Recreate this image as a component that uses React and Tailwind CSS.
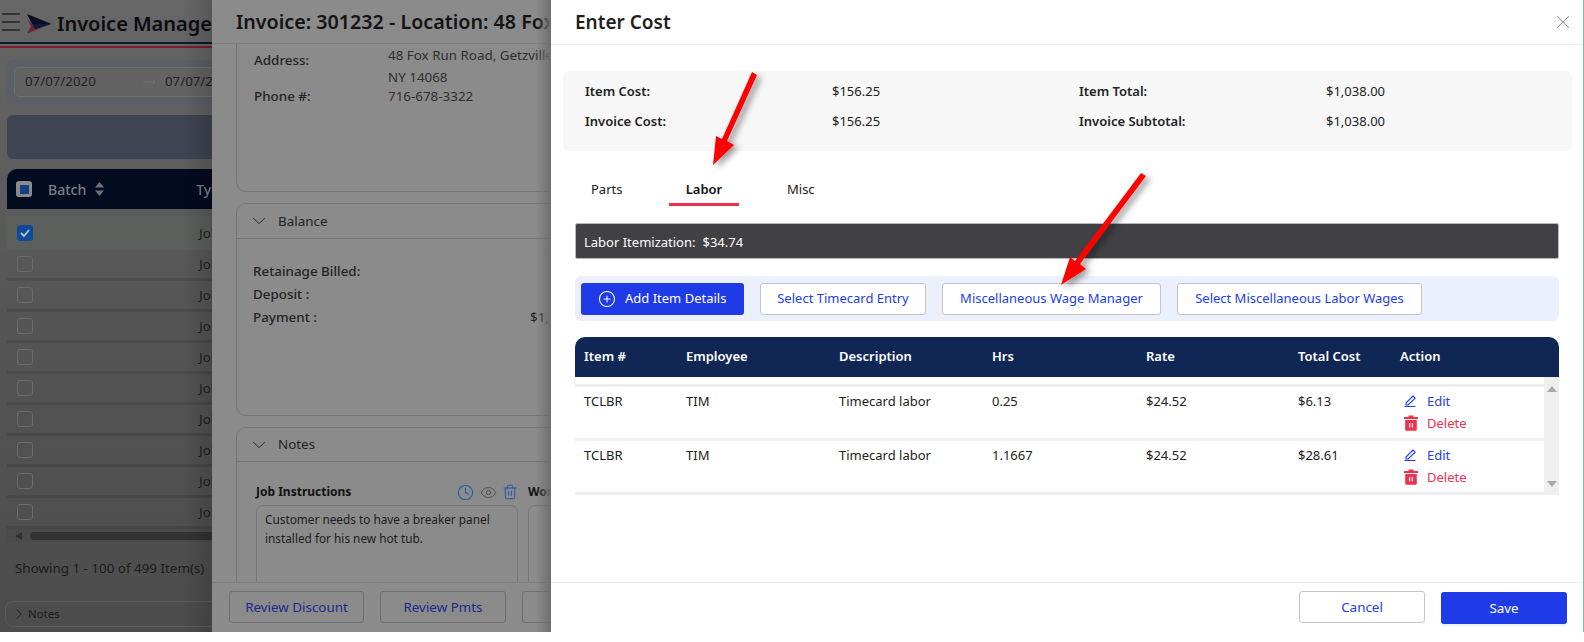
import { ChevronDown, ChevronRight, CirclePlus, Clock, Eye, MoveRight, Trash2, X } from "lucide-react";

function Logo() {
  return (
    <svg width="25" height="20" viewBox="0 0 25 20" className="shrink-0">
      <path d="M0 0 L24.5 10 L5 10 Z" fill="#080e22" />
      <path d="M5 10 L24.5 10 L8 15.5 Z" fill="#0f1a3a" />
      <path d="M0 5 L5 10 L8 15.5 L18 12.5 L0 19.5 L4 12 Z" fill="#6e2329" />
    </svg>
  );
}

function SolidTrash() {
  return (
    <svg width="16" height="16" viewBox="0 0 16 16" className="shrink-0">
      <path d="M5.5 0.5h5v1.6h4.5v2H1v-2h4.5z" fill="#f0304f" />
      <path d="M2.2 5h11.6v9.5a1.2 1.2 0 0 1-1.2 1.2H3.4a1.2 1.2 0 0 1-1.2-1.2z" fill="#f0304f" />
      <rect x="6" y="8" width="1.2" height="4.5" fill="#fff" />
      <rect x="8.8" y="8" width="1.2" height="4.5" fill="#fff" />
    </svg>
  );
}

function EditPen() {
  return (
    <svg width="12" height="12" viewBox="0 0 12 12" fill="none" stroke="currentColor" strokeWidth="1.1" className="shrink-0">
      <path d="M0.5 11.5 H11.5" />
      <path d="M2 10 V8 L9 1 L11.2 3.2 L4 10 Z" strokeLinejoin="round" />
    </svg>
  );
}

function LeftPanel() {
  const rows = [0, 1, 2, 3, 4, 5, 6, 7, 8];
  return (
    <div className="relative w-[212px] h-[632px] shrink-0 overflow-hidden bg-gradient-to-b from-[#676767] via-[#555555] to-[#4c4c4c] text-[#1a1a1a]">
      <div className="h-[42px] flex items-center">
        <div className="ml-[2px] w-[18px] shrink-0 flex flex-col gap-[6px] mt-[2px]">
          <div className="h-[2px] bg-[#333333]" />
          <div className="h-[2px] bg-[#333333]" />
          <div className="h-[2px] bg-[#333333]" />
        </div>
        <div className="ml-[7px] mt-[6px] shrink-0"><Logo /></div>
        <div className="ml-[5px] text-[20px] leading-none font-semibold whitespace-nowrap text-[#0c0c10] mt-[6px]">Invoice Management</div>
      </div>
      <div className="h-[2px] bg-[#0b1a33]" />
      <div className="h-[2px] bg-[#666666]" />
      <div className="h-[2px] bg-[#7a1f2b]" />
      <div className="mt-[12px] ml-[7px] w-[300px] h-[45px] rounded-[6px] bg-[#5c5f66] pt-[7px] pl-[7px]">
        <div className="h-[30px] rounded-[5px] bg-[#636363] border border-[#6e6e6e] flex items-center pl-[10px] text-[13.3px] text-[#222222]">
          <span className="w-[117px] shrink-0">07/07/2020</span>
          <MoveRight size={14} strokeWidth={1} className="shrink-0 text-[#7a7a7a]" />
          <span className="ml-[9px] whitespace-nowrap">07/07/2020</span>
        </div>
      </div>
      <div className="mt-[10px] ml-[7px] w-[300px] h-[44px] rounded-[6px] bg-[#3e4451]" />
      <div className="mt-[10px] ml-[7px] w-[300px] h-[40px] rounded-tl-[10px] bg-[#020b1f] flex items-center text-[14px] text-[#7c7f86]">
        <div className="ml-[9px] w-[16px] h-[16px] rounded-[3px] bg-[#8a8a8a] flex items-center justify-center">
          <div className="w-[9px] h-[9px] bg-[#123f86]" />
        </div>
        <span className="ml-[16px] font-medium">Batch</span>
        <svg width="9" height="14" viewBox="0 0 9 14" className="ml-[9px]">
          <path d="M4.5 0 L9 5.5 H0 Z M4.5 14 L0 8.5 H9 Z" fill="#6d7077" />
        </svg>
        <span className="ml-[92px] font-medium">Type</span>
      </div>
      <div className="mt-[7px] ml-[7px] w-[300px] h-[34px] bg-[#5b605d] flex items-center text-[13.4px] text-[#1f1f1f]">
        <div className="ml-[10px] w-[16px] h-[16px] rounded-[3px] bg-[#124a9a] flex items-center justify-center">
          <svg width="10" height="8" viewBox="0 0 10 8"><path d="M1 4 L4 7 L9 1" stroke="#b8c4d6" strokeWidth="1.8" fill="none" /></svg>
        </div>
        <span className="ml-[166px]">Job</span>
      </div>
      {rows.map((r) => (
        <div key={r} className="ml-[7px] w-[300px] h-[31px] border-b-[3px] border-black/10 last:h-[29px] last:border-b-0 flex items-center text-[13.4px] text-[#1f1f1f]">
          <div className="ml-[10px] w-[16px] h-[16px] rounded-[3px] border border-[#6b6b6b]" />
          <span className="ml-[166px]">Job</span>
        </div>
      ))}
      <div className="ml-[7px] w-[300px] h-[13px] bg-[#4b4b4b] flex items-center">
        <div className="ml-[8px] w-0 h-0 border-y-[4px] border-y-transparent border-r-[7px] border-r-[#2f2f2f]" />
        <div className="ml-[8px] w-[260px] h-[8px] rounded-full bg-[#333333]" />
      </div>
      <div className="ml-[7px] w-[300px] h-[53px] flex items-center pl-[8px] text-[13.4px] text-[#1c1c1c] whitespace-nowrap">Showing 1 - 100 of 499 Item(s)</div>
      <div className="mt-[6px] ml-[5px] w-[300px] h-[26px] rounded-[8px] border border-[#5c5c5c] flex items-center pl-[4px] text-[11.4px] text-[#1a1a1a]">
        <ChevronRight size={18} strokeWidth={1.2} />
        <span>Notes</span>
      </div>
      <div className="absolute right-0 top-0 w-[30px] h-full bg-gradient-to-l from-black/15 to-transparent" />
    </div>
  );
}

function DrawerPanel() {
  return (
    <div className="relative w-[339px] h-[632px] shrink-0 overflow-hidden bg-[#8b8b8b] flex flex-col text-[#242424]">
      <div className="h-[44px] shrink-0 border-b border-[#7f7f7f] flex items-center pl-[24px] text-[19.7px] font-semibold whitespace-nowrap text-[#141414]">
        Invoice: 301232 - Location: 48 Fox Run Road
      </div>
      <div className="flex-1 overflow-hidden pl-[24px]">
        <div className="w-[600px] h-[148px] border-x border-b border-[#757575] rounded-b-[10px] pl-[17px] text-[13.4px]">
          <div className="flex h-[42px]">
            <div className="w-[134px] pt-[6px] font-medium">Address:</div>
            <div className="leading-[22px] text-[#2f2f2f]">48 Fox Run Road, Getzville<br />NY 14068</div>
          </div>
          <div className="flex leading-[20px]">
            <div className="w-[134px] font-medium">Phone #:</div>
            <div className="text-[#2f2f2f]">716-678-3322</div>
          </div>
        </div>
        <div className="mt-[11px] w-[600px] h-[213px] border border-[#757575] rounded-[10px]">
          <div className="h-[35px] border-b border-[#757575] flex items-center pl-[11px] text-[13.4px]">
            <ChevronDown size={22} strokeWidth={1} />
            <span className="ml-[8px]">Balance</span>
          </div>
          <div className="pt-[21px] pl-[16px] text-[13.4px] font-medium">
            <div className="h-[23px] leading-[23px]">Retainage Billed:</div>
            <div className="h-[23px] leading-[23px]">Deposit :</div>
            <div className="h-[23px] leading-[23px] relative">Payment :<span className="absolute left-[277px] top-0 font-normal">$1,038.00</span></div>
          </div>
        </div>
        <div className="mt-[11px] w-[600px] h-[300px] border border-[#757575] rounded-[10px]">
          <div className="h-[34px] border-b border-[#757575] flex items-center pl-[11px] text-[13.4px]">
            <ChevronDown size={22} strokeWidth={1} />
            <span className="ml-[8px]">Notes</span>
          </div>
          <div className="flex pl-[19px] pt-[21px] gap-[10px]">
            <div className="w-[262px]">
              <div className="flex items-center h-[18px] text-[12px] font-bold text-[#111111]">
                <span>Job Instructions</span>
                <Clock size={17} strokeWidth={1.5} className="ml-auto mr-[6px] text-[#1d5bb0]" />
                <Eye size={17} strokeWidth={1.3} className="mr-[5px] text-[#4d4d4d]" />
                <Trash2 size={16} strokeWidth={1.5} className="text-[#1d5bb0]" />
              </div>
              <div className="mt-[4px] h-[150px] rounded-[7px] border border-[#757575] px-[8px] py-[4px] text-[11.8px] leading-[19px] text-[#1d1d1d]">
                Customer needs to have a breaker panel installed for his new hot tub.
              </div>
            </div>
            <div className="w-[262px]">
              <div className="h-[18px] text-[12px] font-bold text-[#111111] flex items-center">Work Instructions</div>
              <div className="mt-[4px] h-[150px] rounded-[7px] border border-[#757575]" />
            </div>
          </div>
        </div>
      </div>
      <div className="h-[50px] shrink-0 border-t border-[#7f7f7f] bg-[#8b8b8b] flex items-start pt-[8px] pl-[17px] gap-[16px] text-[13.4px] text-[#1c2a8c] relative z-10">
        <div className="w-[135px] h-[32px] shrink-0 border border-[#6f6f6f] rounded-[3px] flex items-center justify-center">Review Discount</div>
        <div className="w-[126px] h-[32px] shrink-0 border border-[#6f6f6f] rounded-[3px] flex items-center justify-center">Review Pmts</div>
        <div className="w-[126px] h-[32px] shrink-0 border border-[#6f6f6f] rounded-[3px]" />
      </div>
      <div className="absolute right-0 top-0 w-[15px] h-full z-20 bg-gradient-to-l from-[#6e6e6e] to-transparent" />
    </div>
  );
}

function Cell({ w, children, className = "" }) {
  return <div className={`${w} shrink-0 ${className}`}>{children}</div>;
}

function LaborRow({ hrs, total }) {
  return (
    <div className="flex h-[51px] pl-[9px] pt-[5px] text-[13px] leading-[18px] text-[#222222]">
      <Cell w="w-[102px]">TCLBR</Cell>
      <Cell w="w-[153px]">TIM</Cell>
      <Cell w="w-[153px]">Timecard labor</Cell>
      <Cell w="w-[154px]">{hrs}</Cell>
      <Cell w="w-[152px]">$24.52</Cell>
      <Cell w="w-[102px]">{total}</Cell>
      <div className="flex flex-col">
        <div className="flex items-center h-[18px] text-[#2440e8]">
          <div className="ml-[4px]"><EditPen /></div>
          <span className="ml-[11px]">Edit</span>
        </div>
        <div className="flex items-center h-[18px] mt-[4px] text-[#f0304f]">
          <div className="ml-[3px]"><SolidTrash /></div>
          <span className="ml-[8px]">Delete</span>
        </div>
      </div>
    </div>
  );
}

function CostModal() {
  const summary = [
    ["Item Cost:", "$156.25", "Item Total:", "$1,038.00"],
    ["Invoice Cost:", "$156.25", "Invoice Subtotal:", "$1,038.00"],
  ];
  return (
    <div className="w-[1032px] h-[642px] shrink-0 bg-white flex flex-col text-[#222222]">
      <div className="h-[45px] shrink-0 border-b border-[#ebebeb] flex items-center justify-between pl-[24px] pr-[9px]">
        <span className="text-[19px] font-semibold text-[#1f1f1f]">Enter Cost</span>
        <X size={22} strokeWidth={1.1} className="text-[#8c8c8c]" />
      </div>
      <div className="mt-[26px] mx-[12px] w-[1009px] h-[80px] rounded-[6px] bg-[#f7f7f7] pl-[22px] pt-[6px] text-[13px]">
        {summary.map((row) => (
          <div key={row[0]} className="grid grid-cols-[247px_247px_247px_247px] h-[30px] items-center">
            <span className="font-semibold">{row[0]}</span>
            <span>{row[1]}</span>
            <span className="font-semibold">{row[2]}</span>
            <span>{row[3]}</span>
          </div>
        ))}
      </div>
      <div className="mt-[23px] ml-[24px] flex h-[32px] text-[13px]">
        <div className="w-[70px] pl-[16px] leading-[30px]">Parts</div>
        <div className="ml-[24px] w-[70px] h-[32px] border-b-[3px] border-[#f0304f] text-center font-semibold leading-[30px] text-[#111111]">Labor</div>
        <div className="ml-[48px] leading-[30px]">Misc</div>
      </div>
      <div className="mt-[17px] mx-[24px] h-[36px] rounded-[2px] border border-[#b8b8c0] bg-[#414045] flex items-center pl-[8px] pt-[3px] text-[13px] text-white">
        <span>Labor Itemization:</span>
        <span className="ml-[7px]">$34.74</span>
      </div>
      <div className="mt-[17px] mx-[24px] h-[45px] rounded-[6px] bg-[#ecf0fd] flex items-center pl-[6px] text-[13px] text-[#2440e8]">
        <button className="w-[163px] h-[32px] rounded-[3px] bg-[#1f3be8] text-white flex items-center pl-[17px]">
          <CirclePlus size={18} strokeWidth={1.4} />
          <span className="ml-[9px]">Add Item Details</span>
        </button>
        <button className="ml-[16px] w-[166px] h-[32px] rounded-[3px] border border-[#c4c4c8] bg-white">Select Timecard Entry</button>
        <button className="ml-[16px] w-[219px] h-[32px] rounded-[3px] border border-[#c4c4c8] bg-white">Miscellaneous Wage Manager</button>
        <button className="ml-[16px] w-[245px] h-[32px] rounded-[3px] border border-[#c4c4c8] bg-white">Select Miscellaneous Labor Wages</button>
      </div>
      <div className="mt-[16px] mx-[24px]">
        <div className="h-[40px] rounded-t-[10px] bg-[#102756] flex items-center pl-[9px] text-[13px] font-semibold text-white">
          <Cell w="w-[102px]">Item #</Cell>
          <Cell w="w-[153px]">Employee</Cell>
          <Cell w="w-[153px]">Description</Cell>
          <Cell w="w-[154px]">Hrs</Cell>
          <Cell w="w-[152px]">Rate</Cell>
          <Cell w="w-[102px]">Total Cost</Cell>
          <span>Action</span>
        </div>
        <div className="flex h-[118px]">
          <div className="flex-1">
            <div className="h-[7px]" />
            <div className="h-[3px] bg-[#efefef]" />
            <LaborRow hrs="0.25" total="$6.13" />
            <div className="h-[3px] bg-[#efefef]" />
            <LaborRow hrs="1.1667" total="$28.61" />
            <div className="h-[3px] bg-[#efefef]" />
          </div>
          <div className="w-[15px] bg-[#efefef] flex flex-col items-center justify-between pt-[9px] pb-[8px]">
            <div className="w-0 h-0 border-x-[5px] border-x-transparent border-b-[6px] border-b-[#a8a8a8]" />
            <div className="w-0 h-0 border-x-[5px] border-x-transparent border-t-[6px] border-t-[#a8a8a8]" />
          </div>
        </div>
      </div>
      <div className="mt-[87px] flex-1 border-t border-[#ebebeb] flex items-start justify-end pt-[8px] pr-[16px] gap-[16px] text-[13.4px]">
        <button className="w-[126px] h-[32px] rounded-[3px] border border-[#c4c4c4] bg-white text-[#2440e8]">Cancel</button>
        <button className="w-[126px] h-[32px] mt-px rounded-[3px] bg-[#1f3be8] text-white shadow-[0_2px_0_#e6f4ff]">Save</button>
      </div>
    </div>
  );
}

function Arrows() {
  return (
    <svg className="absolute left-0 top-0 pointer-events-none z-30" width="1584" height="642" viewBox="0 0 1584 642">
      <defs>
        <filter id="arrow-shadow" x="-30%" y="-30%" width="170%" height="170%">
          <feDropShadow dx="4" dy="3" stdDeviation="3" floodColor="#000" floodOpacity="0.4" />
        </filter>
      </defs>
      <g filter="url(#arrow-shadow)" fill="#fe0000">
        <path d="M752 72 L757 75 L727 141 L734 145 L713 165 L716 136 L722 139 Z" />
        <path d="M1141 173 L1146 176 L1080 264 L1086 269 L1061 285 L1070 257 L1075 261 Z" />
      </g>
    </svg>
  );
}

export default function App() {
  return (
    <div className="relative w-[1584px] h-[642px] overflow-hidden bg-white flex font-['Noto_Sans',sans-serif]">
      <LeftPanel />
      <DrawerPanel />
      <CostModal />
      <div className="w-px h-[632px] bg-[#6fc0bd]" />
      <Arrows />
    </div>
  );
}
